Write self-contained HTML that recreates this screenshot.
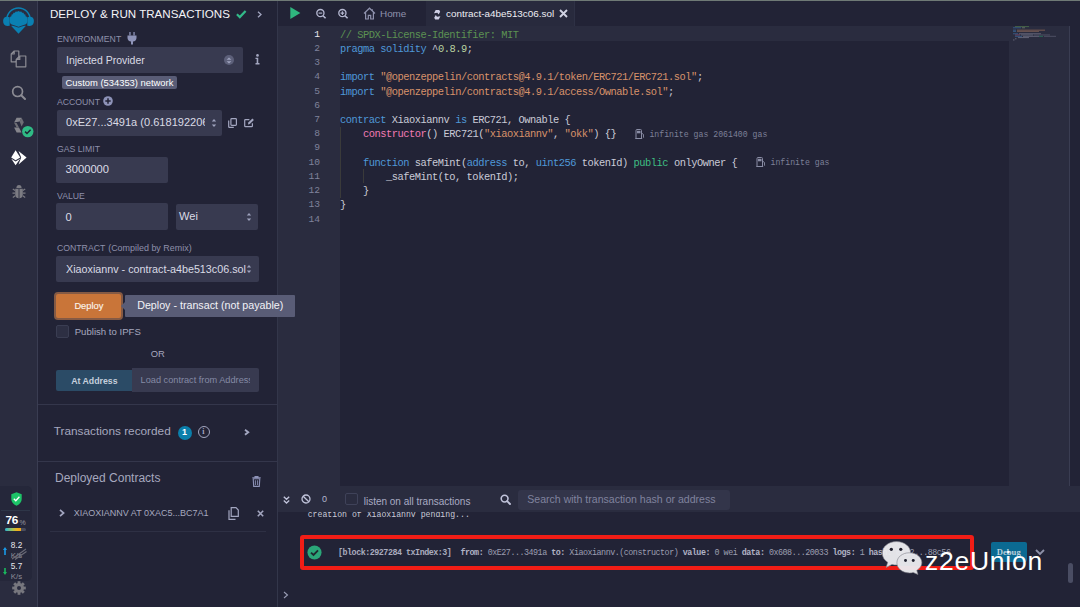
<!DOCTYPE html>
<html><head><meta charset="utf-8">
<style>
*{box-sizing:border-box;margin:0;padding:0}
html,body{width:1080px;height:607px;overflow:hidden;background:#222336;font-family:"Liberation Sans",sans-serif;color:#babbcc;position:relative}
.a{position:absolute}
.t{position:absolute;white-space:pre;line-height:1}
.lbl{position:absolute;white-space:pre;line-height:1;font-size:8.7px;color:#8e90ab}
.box{position:absolute;background:#383a50;border-radius:2px}
.code{position:absolute;left:340px;font-family:"Liberation Mono",monospace;font-size:10.4px;letter-spacing:-0.48px;line-height:14.23px;white-space:pre;color:#c9cad6}
.ln{position:absolute;left:284px;width:36px;font-family:"Liberation Mono",monospace;font-size:9.6px;line-height:14.23px;white-space:pre;color:#80839c;text-align:right}
.kw{color:#4f98d8}.str{color:#d8926a}.cm{color:#5c9252}.num{color:#b9d3a0}.pk{color:#f07bb4}.gr{color:#3fbf83}
.gas{position:absolute;font-family:"Liberation Mono",monospace;font-size:8.2px;line-height:1;white-space:pre;color:#7d8098}
svg{position:absolute;overflow:visible}
</style></head><body>
<!-- top line -->
<div class="a" style="left:0;top:0;width:1080px;height:1px;background:#6f7a76"></div>
<!-- icon panel -->
<div class="a" style="left:0;top:1px;width:37px;height:606px;background:#2a2c3f"></div>
<div class="a" style="left:37px;top:1px;width:1px;height:606px;background:#3a3d52"></div>
<!-- side panel -->
<div class="a" style="left:38px;top:1px;width:239px;height:606px;background:#222336"></div>
<div class="a" style="left:277px;top:1px;width:1px;height:606px;background:#33364a"></div>


<!-- SIDE PANEL CONTENT -->
<div class="t" style="left:50px;top:8.4px;font-size:11.6px;color:#f4f4f8">DEPLOY &amp; RUN TRANSACTIONS</div>
<svg style="left:235.5px;top:9.8px" width="10.5" height="8.5" viewBox="0 0 10.5 8.5"><path d="M0.9 4.3 L3.8 7.1 L9.6 1" fill="none" stroke="#32ba89" stroke-width="2.2"/></svg>
<svg style="left:257px;top:10.5px" width="5" height="7" viewBox="0 0 5 7"><path d="M1 0.8 L4 3.5 L1 6.2" fill="none" stroke="#a3a6c0" stroke-width="1.3"/></svg>

<div class="lbl" style="left:57px;top:34.8px">ENVIRONMENT</div>
<svg style="left:127px;top:32px" width="10" height="13" viewBox="0 0 10 13"><rect x="2.3" y="0" width="1.3" height="3.5" fill="#8e93b8"/><rect x="6.4" y="0" width="1.3" height="3.5" fill="#8e93b8"/><path d="M0.5 3.5 H9.5 V6 C9.5 8 8 9.3 6 9.6 V12.5 H4 V9.6 C2 9.3 0.5 8 0.5 6Z" fill="#8e93b8"/></svg>
<div class="box" style="left:57px;top:46.8px;width:186px;height:25.8px"></div>
<div class="t" style="left:66px;top:54.9px;font-size:10.5px;color:#dadbe5">Injected Provider</div>
<div class="a" style="left:224px;top:55px;width:10px;height:10px;border-radius:50%;background:#5d607a"></div>
<svg style="left:226px;top:56.5px" width="6" height="7" viewBox="0 0 6 7"><path d="M0.6 2.8 L3 0.4 L5.4 2.8Z M0.6 4.2 L3 6.6 L5.4 4.2Z" fill="#9fa3be"/></svg>
<svg style="left:254.5px;top:53.7px" width="5" height="10.4" viewBox="0 0 6 12" preserveAspectRatio="none"><circle cx="3" cy="1.6" r="1.6" fill="#a3a6c0"/><path d="M0.6 4.2 H3.9 V10.4 H5.4 V12 H0.6 V10.4 H2 V5.8 H0.6Z" fill="#a3a6c0"/></svg>
<div class="a" style="left:62px;top:76px;width:115px;height:13px;background:#595c76;border-radius:2px"></div>
<div class="t" style="left:65.5px;top:77.6px;font-size:9.4px;color:#ffffff">Custom (534353) network</div>

<div class="lbl" style="left:57px;top:97.5px">ACCOUNT</div>
<svg style="left:103px;top:96px" width="10" height="10" viewBox="0 0 10 10"><circle cx="5" cy="5" r="4.8" fill="#8e93b8"/><path d="M5 2.3 V7.7 M2.3 5 H7.7" stroke="#222336" stroke-width="1.5"/></svg>
<div class="box" style="left:57px;top:110px;width:165px;height:25.5px"></div>
<div class="a" style="left:66px;top:114px;width:138.5px;height:18px;overflow:hidden"><div class="t" style="left:0;top:3.1px;font-size:11.05px;color:#dadbe5">0xE27...3491a (0.618192206</div></div>
<svg style="left:211px;top:117.5px" width="6" height="10" viewBox="0 0 6 10"><path d="M0.8 3.6 L3 1 L5.2 3.6Z M0.8 6.4 L3 9 L5.2 6.4Z" fill="#9fa3be"/></svg>
<svg style="left:227.8px;top:118px" width="9" height="10" viewBox="0 0 9 10"><rect x="2.9" y="0.6" width="5.5" height="6.8" rx="0.8" fill="none" stroke="#a3a6c0" stroke-width="1.2"/><path d="M0.7 2.6 V8.7 Q0.7 9.4 1.4 9.4 H5.8" fill="none" stroke="#a3a6c0" stroke-width="1.2"/></svg>
<svg style="left:244.4px;top:118px" width="11.2" height="9.4" viewBox="0 0 11.2 9.4"><path d="M5.4 1.6 H1.5 Q0.7 1.6 0.7 2.4 V7.9 Q0.7 8.7 1.5 8.7 H7.6 Q8.4 8.7 8.4 7.9 V5.2" fill="none" stroke="#a3a6c0" stroke-width="1.2"/><path d="M4 6.4 L4.3 4.6 L8.4 0.5 L9.9 2 L5.8 6.1Z" fill="#a3a6c0"/></svg>

<div class="lbl" style="left:57px;top:144.8px">GAS LIMIT</div>
<div class="box" style="left:56px;top:156.5px;width:111.5px;height:26px"></div>
<div class="t" style="left:65.5px;top:164.3px;font-size:11.2px;color:#dadbe5">3000000</div>

<div class="lbl" style="left:57px;top:192px">VALUE</div>
<div class="box" style="left:56px;top:203px;width:111.5px;height:26.5px"></div>
<div class="t" style="left:65.5px;top:211.6px;font-size:11.2px;color:#dadbe5">0</div>
<div class="box" style="left:175.5px;top:204px;width:82.5px;height:25.5px"></div>
<div class="t" style="left:179px;top:211px;font-size:11.1px;color:#dadbe5">Wei</div>
<svg style="left:246px;top:212px" width="6" height="10" viewBox="0 0 6 10"><path d="M0.8 3.6 L3 1 L5.2 3.6Z M0.8 6.4 L3 9 L5.2 6.4Z" fill="#9fa3be"/></svg>

<div class="lbl" style="left:57px;top:244px">CONTRACT</div>
<div class="t" style="left:108.2px;top:243.9px;font-size:8.95px;color:#8e90ab">(Compiled by Remix)</div>
<div class="box" style="left:56px;top:255.6px;width:202.5px;height:26px"></div>
<div class="a" style="left:66px;top:258px;width:180px;height:20px;overflow:hidden"><div class="t" style="left:0;top:5.8px;font-size:10.75px;color:#dadbe5">Xiaoxiannv - contract-a4be513c06.sol</div></div>
<svg style="left:246px;top:264px" width="6" height="10" viewBox="0 0 6 10"><path d="M0.8 3.6 L3 1 L5.2 3.6Z M0.8 6.4 L3 9 L5.2 6.4Z" fill="#9fa3be"/></svg>

<!-- deploy -->
<div class="a" style="left:54.3px;top:291.7px;width:69px;height:28.6px;background:#c97539;border:2px solid #855a44;border-radius:4px"></div>
<div class="t" style="left:74.4px;top:301.6px;font-size:9.3px;color:#fbf3ea;-webkit-text-stroke:0.15px #fbf3ea">Deploy</div>
<svg style="left:120px;top:301px" width="6" height="10" viewBox="0 0 6 10"><path d="M6 0 L1 5 L6 10Z" fill="#595c76"/></svg>
<div class="a" style="left:125px;top:295px;width:170px;height:22px;background:#595c76;border-radius:1px;z-index:5"></div>
<div class="t" style="left:137.2px;top:299.9px;font-size:10.7px;color:#f2f2f6;z-index:6">Deploy - transact (not payable)</div>

<div class="a" style="left:56px;top:325.4px;width:13px;height:12.2px;background:#2d2f43;border:1px solid #3a3d52;border-radius:2px"></div>
<div class="t" style="left:74.7px;top:326.8px;font-size:9.6px;color:#a6a8bf">Publish to IPFS</div>
<div class="t" style="left:150.8px;top:349.4px;font-size:9.4px;color:#a6a8bf">OR</div>

<div class="a" style="left:56px;top:370px;width:76px;height:21px;background:#2b4b66;border-radius:2px 0 0 2px"></div>
<div class="t" style="left:71.2px;top:376.5px;font-size:8.75px;font-weight:bold;color:#c5cfdc">At Address</div>
<div class="a" style="left:132px;top:368.4px;width:126.6px;height:23.2px;background:#383a50;border-radius:0 2px 2px 0"></div>
<div class="a" style="left:140px;top:372px;width:110px;height:16px;overflow:hidden"><div class="t" style="left:0.6px;top:4px;font-size:9.2px;color:#858aa5">Load contract from Address</div></div>

<div class="a" style="left:38px;top:404px;width:239px;height:1px;background:#34364b"></div>
<div class="t" style="left:53.8px;top:426px;font-size:11.8px;color:#a6a8bf">Transactions recorded</div>
<div class="a" style="left:177.8px;top:425.6px;width:14px;height:14px;border-radius:50%;background:#0b7fab"></div>
<div class="t" style="left:182px;top:428px;font-size:9px;font-weight:bold;color:#ffffff">1</div>
<div class="a" style="left:197.8px;top:426.2px;width:12px;height:12px;border-radius:50%;border:1.2px solid #a3a6c0"></div>
<div class="t" style="left:202.3px;top:428.1px;font-size:8px;font-weight:bold;color:#a3a6c0;font-family:'Liberation Serif',serif">i</div>
<svg style="left:244.4px;top:429px" width="5.5" height="6.5" viewBox="0 0 5.5 6.5"><path d="M1 0.8 L4.2 3.25 L1 5.7" fill="none" stroke="#a3a6c0" stroke-width="1.9"/></svg>

<div class="a" style="left:38px;top:461px;width:239px;height:1px;background:#34364b"></div>
<div class="t" style="left:55px;top:472px;font-size:12px;color:#a6a8bf">Deployed Contracts</div>
<svg style="left:251.5px;top:475.5px" width="9" height="11" viewBox="0 0 9 11"><path d="M0.3 1.8 H8.7 M3 1.8 V0.6 H6 V1.8" fill="none" stroke="#8e93b8" stroke-width="1.1"/><path d="M1.2 2.8 H7.8 L7.3 10.4 H1.7Z" fill="none" stroke="#8e93b8" stroke-width="1.1"/><path d="M3.4 4.3 V9 M5.6 4.3 V9" stroke="#8e93b8" stroke-width="0.9"/></svg>
<svg style="left:58.5px;top:509px" width="6" height="8" viewBox="0 0 6 8"><path d="M1 0.8 L4.6 4 L1 7.2" fill="none" stroke="#a3a6c0" stroke-width="1.7"/></svg>
<div class="t" style="left:73.8px;top:508.6px;font-size:9px;color:#a6a8bf">XIAOXIANNV AT 0XAC5...BC7A1</div>
<svg style="left:227.5px;top:506.5px" width="11" height="13" viewBox="0 0 11 13"><path d="M3.2 0.7 H8 L10.3 3 V9.3 H3.2Z" fill="none" stroke="#a3a6c0" stroke-width="1.2"/><path d="M1 3.3 V12.3 H7.5" fill="none" stroke="#a3a6c0" stroke-width="1.2"/></svg>
<svg style="left:256.5px;top:509.5px" width="7" height="7" viewBox="0 0 7 7"><path d="M0.8 0.8 L6.2 6.2 M6.2 0.8 L0.8 6.2" stroke="#a3a6c0" stroke-width="1.6"/></svg>
<div class="a" style="left:50px;top:531px;width:216px;height:1px;background:#2e3044"></div>


<!-- ICON PANEL ICONS -->
<svg style="left:0;top:0" width="37" height="40" viewBox="0 0 37 40">
 <path d="M6.9 19.5 A11.6 11.6 0 0 1 30.1 19.5" fill="none" stroke="#0a80b2" stroke-width="1.5"/>
 <path d="M3.1 21 Q3.1 16.7 7.2 16.7 L9.7 17.2 L9.7 25.8 L7.2 25.9 Q3.1 25.7 3.1 21Z" fill="#0a80b2"/>
 <path d="M33.9 21 Q33.9 16.7 29.8 16.7 L27.3 17.2 L27.3 25.8 L29.8 25.9 Q33.9 25.7 33.9 21Z" fill="#0a80b2"/>
 <path d="M9.6 20 L10.2 16.8 L11.4 16.2 L11.6 14.6 L13 14.2 L13.4 12.8 L14.9 12.7 L15.7 11.5 L17.1 11.8 L18.5 10.9 L19.9 11.8 L21.3 11.5 L22.1 12.7 L23.6 12.8 L24 14.2 L25.4 14.6 L25.6 16.2 L26.8 16.8 L27.4 20 Q27.4 24.2 24.2 25.6 L18.5 26.8 L12.8 25.6 Q9.6 24.2 9.6 20Z" fill="#0a80b2"/>
 <path d="M11 25.8 L26 25.8 L18.5 33.8Z" fill="#0a80b2"/>
 <path d="M10.8 24.6 L18.5 27.2 L26.2 24.6" fill="none" stroke="#2a2c3f" stroke-width="0.8"/>
</svg>
<svg style="left:10px;top:50px" width="18" height="18" viewBox="0 0 18 18">
 <path d="M4.2 1 H8.8 V8.8 L5.7 11.8 H1.2 V4 Z M1.2 4 H4.2 V1" fill="none" stroke="#8c8c94" stroke-width="1.2" stroke-linejoin="round"/>
 <path d="M9.8 6 H15.8 V16.8 H6.2 V9.4 Z M6.2 9.4 H9.8 V6" fill="#2a2c3f" stroke="#8c8c94" stroke-width="1.2" stroke-linejoin="round"/>
</svg>
<svg style="left:11px;top:85px" width="16" height="16" viewBox="0 0 16 16">
 <circle cx="6.6" cy="6.6" r="4.9" fill="none" stroke="#8c8c94" stroke-width="1.7"/>
 <path d="M10.2 10.2 L14 14" stroke="#8c8c94" stroke-width="2" stroke-linecap="round"/>
</svg>
<svg style="left:0;top:110px" width="37" height="60" viewBox="0 0 37 110">
</svg>
<svg style="left:0;top:0" width="37" height="200" viewBox="0 0 37 200">
 <path d="M14.1 122.6 L16.6 117.7 L21.6 117.7 L19.6 121.6 Z" fill="#85858c"/>
 <path d="M21.6 117.7 L23.8 122.2 L21.6 126.4 L19.6 121.6 Z" fill="#6e6e75"/>
 <path d="M14.1 127.4 L16.6 132.4 L21.6 132.4 L19 127.6 Z" fill="#85858c"/>
 <path d="M14.1 122.8 L16.6 127.6 L19 127.6 L16.6 123 Z" fill="#6e6e75"/>
 <circle cx="27.8" cy="131.6" r="5.7" fill="#2fbb85"/>
 <path d="M25.1 131.6 L27 133.5 L30.6 129.8" fill="none" stroke="#1f2433" stroke-width="1.5"/>
 <path d="M18.5 151 L26.6 157.6 L18.5 164.6 L21.2 157.6 Z" fill="#ffffff"/>
 <path d="M15.6 150.2 L20.3 157.4 L15.6 160.2 L11.2 157.4 Z" fill="#ffffff"/>
 <path d="M11.3 158.8 L15.6 161.6 L20.2 158.8 L15.6 165.2 Z" fill="#ffffff"/>
</svg>
<svg style="left:12px;top:184px" width="14" height="15" viewBox="0 0 14 15">
 <path d="M4.4 4 Q4.4 1 7 1 Q9.6 1 9.6 4Z" fill="#7b7b82"/>
 <path d="M3.2 4.8 H10.8 V10.5 Q10.8 14.2 7 14.2 Q3.2 14.2 3.2 10.5Z" fill="#7b7b82"/>
 <path d="M7 5 V14" stroke="#2a2c3f" stroke-width="0.9"/>
 <path d="M3.2 6.5 L0.8 5 M3.2 9.2 H0.5 M3.2 11.8 L0.8 13.4 M10.8 6.5 L13.2 5 M10.8 9.2 H13.5 M10.8 11.8 L13.2 13.4" stroke="#7b7b82" stroke-width="1.2"/>
</svg>

<!-- monitor overlay widget -->
<div class="a" style="left:-4px;top:486.4px;width:36px;height:94.5px;background:#25273a;border-radius:5px"></div>
<svg style="left:10.5px;top:491.5px" width="11" height="14" viewBox="0 0 11 14"><path d="M5.5 0.3 L10.7 2.2 V7 Q10.7 11.3 5.5 13.7 Q0.3 11.3 0.3 7 V2.2Z" fill="#1dc468"/><path d="M2.8 6.8 L4.8 8.8 L8.4 4.8" fill="none" stroke="#ffffff" stroke-width="1.3"/></svg>
<div class="a" style="left:1px;top:510px;width:29px;height:1px;background:#2e3648"></div>
<div class="t" style="left:5.6px;top:515px;font-size:11.8px;font-weight:bold;color:#ffffff;letter-spacing:-0.3px">76</div>
<div class="t" style="left:19.6px;top:519px;font-size:7px;color:#9a9aa6">%</div>
<div class="a" style="left:5px;top:528px;width:21px;height:3px;border-radius:1.5px;background:#4b4d5c"></div>
<div class="a" style="left:5px;top:528px;width:16.2px;height:3px;border-radius:1.5px 0 0 1.5px;background:linear-gradient(90deg,#27b5d8,#9fc35a 45%,#efb41e 75%,#f0a31a)"></div>
<svg style="left:3px;top:547px" width="4" height="8" viewBox="0 0 4 8"><path d="M2 0 L4 3 H2.8 V8 H1.2 V3 H0Z" fill="#1a9ae8"/></svg>
<div class="t" style="left:10.8px;top:541.8px;font-size:8.2px;color:#e8e8ee">8.2</div>
<div class="t" style="left:10.8px;top:551.6px;font-size:7.8px;color:#8d8d98">K/s</div>
<svg style="left:11px;top:548px" width="16" height="12" viewBox="0 0 16 12"><path d="M1 11 L15 1 M4 11.5 L15.5 3.5" stroke="#6c6c78" stroke-width="1.1"/></svg>
<svg style="left:3px;top:568px" width="4" height="7" viewBox="0 0 4 7"><path d="M2 7 L4 4 H2.8 V0 H1.2 V4 H0Z" fill="#1ab85e"/></svg>
<div class="t" style="left:10.8px;top:563px;font-size:8.2px;color:#e8e8ee">5.7</div>
<div class="t" style="left:10.8px;top:572.7px;font-size:7.8px;color:#8d8d98">K/s</div>
<svg style="left:12px;top:581px" width="14" height="14" viewBox="0 0 14 14"><g fill="#77777e"><circle cx="7" cy="7" r="5"/><rect x="5.6" y="0.2" width="2.8" height="13.6"/><rect x="5.6" y="0.2" width="2.8" height="13.6" transform="rotate(45 7 7)"/><rect x="5.6" y="0.2" width="2.8" height="13.6" transform="rotate(90 7 7)"/><rect x="5.6" y="0.2" width="2.8" height="13.6" transform="rotate(135 7 7)"/></g><circle cx="7" cy="7" r="2" fill="#2a2c3f"/></svg>

<!-- EDITOR -->
<div class="a" style="left:278px;top:1px;width:802px;height:25px;background:#222336"></div>
<div class="a" style="left:426px;top:1px;width:149px;height:25px;background:#282a3d"></div>
<div class="a" style="left:574px;top:1px;width:1px;height:25px;background:#2e3145"></div>
<!-- gutter -->
<div class="a" style="left:278px;top:26px;width:62px;height:460px;background:#2a2c3f"></div>
<!-- current line -->
<div class="a" style="left:340px;top:26px;width:669px;height:15px;background:#2a2c3f"></div>
<!-- minimap -->
<div class="a" style="left:1009px;top:26px;width:61px;height:460px;background:#2a2c3f"></div>
<div class="a" style="left:1069px;top:26px;width:1px;height:460px;background:#3a3d52"></div>
<div class="a" style="left:1070px;top:26px;width:10px;height:460px;background:#222336"></div>


<!-- tabs -->
<svg style="left:289.7px;top:7px" width="11" height="12" viewBox="0 0 11 12"><path d="M0.3 0 L10.4 6 L0.3 12Z" fill="#2fb67f"/></svg>
<svg style="left:315px;top:7.5px" width="12" height="12" viewBox="0 0 12 12"><circle cx="5.4" cy="5.1" r="3.6" fill="none" stroke="#b4b7d0" stroke-width="1.3"/><path d="M8 7.7 L10.6 10.3" stroke="#b4b7d0" stroke-width="1.6"/><path d="M3.6 5.1 H7.2" stroke="#b4b7d0" stroke-width="1.1"/></svg>
<svg style="left:337.2px;top:7.5px" width="12" height="12" viewBox="0 0 12 12"><circle cx="5.4" cy="5.1" r="3.6" fill="none" stroke="#b4b7d0" stroke-width="1.3"/><path d="M8 7.7 L10.6 10.3" stroke="#b4b7d0" stroke-width="1.6"/><path d="M3.6 5.1 H7.2 M5.4 3.3 V6.9" stroke="#b4b7d0" stroke-width="1.1"/></svg>
<svg style="left:363px;top:6.5px" width="13" height="13" viewBox="0 0 13 13"><path d="M1 6.5 L6.5 1.2 L12 6.5 M2.6 5.2 V12 H5.3 V8.4 H7.7 V12 H10.4 V5.2 M9.3 2.2 V3.8" fill="none" stroke="#8f92ad" stroke-width="1.2"/></svg>
<div class="t" style="left:380px;top:9px;font-size:9.9px;color:#8f92ad">Home</div>
<svg style="left:434px;top:9.6px" width="6.4" height="9.6" viewBox="0 0 6.4 9.6"><path d="M0 3.3 L1.7 0 L5.2 0 L6.2 1.8 L4.6 4.6 L3.4 2.8 Z" fill="#cfd0e6"/><path d="M6.4 6.3 L4.7 9.6 L1.2 9.6 L0.2 7.8 L1.8 5 L3 6.8 Z" fill="#cfd0e6"/></svg>
<div class="t" style="left:446px;top:9px;font-size:9.9px;color:#eeeef4">contract-a4be513c06.sol</div>
<svg style="left:559px;top:9px" width="9" height="9" viewBox="0 0 9 9"><path d="M1 1 L8 8 M8 1 L1 8" stroke="#d0d2e2" stroke-width="1.9"/></svg>

<!-- line numbers -->
<div class="ln" style="top:27.6px"><span style="color:#e8e8ee">1</span>
2
3
4
5
6
7
8
9
10
11
12
13
14</div>
<div class="code" style="top:27.6px"><span class="cm">// SPDX-License-Identifier: MIT</span>
<span class="kw">pragma</span> <span class="kw">solidity</span> ^<span class="num">0.8.9</span>;

<span class="kw">import</span> <span class="str">"@openzeppelin/contracts@4.9.1/token/ERC721/ERC721.sol"</span>;
<span class="kw">import</span> <span class="str">"@openzeppelin/contracts@4.9.1/access/Ownable.sol"</span>;

<span class="kw">contract</span> Xiaoxiannv <span class="kw">is</span> ERC721, Ownable {
    <span class="pk">constructor</span>() ERC721(<span class="str">"xiaoxiannv"</span>, <span class="str">"okk"</span>) {}

    <span class="kw">function</span> safeMint(<span class="kw">address</span> to, <span class="kw">uint256</span> tokenId) <span class="gr">public</span> onlyOwner {
        _safeMint(to, tokenId);
    }
}
</div>
<!-- indent guides -->
<div class="a" style="left:340.3px;top:127px;width:1px;height:70.5px;background:#3a3a3a"></div>
<div class="a" style="left:363.4px;top:169.2px;width:1px;height:14px;background:#3a3a3a"></div>
<!-- gas annotations -->
<svg style="left:635px;top:128.5px" width="10" height="10" viewBox="0 0 10 10"><path d="M1 9.5 V1.5 Q1 0.5 2 0.5 H5.5 Q6.5 0.5 6.5 1.5 V9.5Z M0.3 9.5 H7.2" fill="none" stroke="#8a8da5" stroke-width="1"/><rect x="2" y="1.8" width="3.5" height="2.5" fill="#8a8da5"/><path d="M6.5 4 L8.5 5.5 V8 Q8.5 8.8 9 8.5" fill="none" stroke="#8a8da5" stroke-width="0.9"/></svg>
<div class="gas" style="left:649.4px;top:130.6px">infinite gas 2061400 gas</div>
<svg style="left:756px;top:157px" width="10" height="10" viewBox="0 0 10 10"><path d="M1 9.5 V1.5 Q1 0.5 2 0.5 H5.5 Q6.5 0.5 6.5 1.5 V9.5Z M0.3 9.5 H7.2" fill="none" stroke="#8a8da5" stroke-width="1"/><rect x="2" y="1.8" width="3.5" height="2.5" fill="#8a8da5"/><path d="M6.5 4 L8.5 5.5 V8 Q8.5 8.8 9 8.5" fill="none" stroke="#8a8da5" stroke-width="0.9"/></svg>
<div class="gas" style="left:770.5px;top:159.1px">infinite gas</div>


<!-- minimap content -->
<svg style="left:1009px;top:26px" width="60" height="16" viewBox="0 0 60 16" style="opacity:.8">
 <g opacity="0.5">
 <rect x="6" y="0" width="14" height="1.1" fill="#5a8f4f"/>
 <rect x="4" y="1.2" width="8" height="1.1" fill="#3f7bb8"/><rect x="13" y="1.2" width="3" height="1.1" fill="#8fa080"/>
 <rect x="4" y="3.6" width="3" height="1.2" fill="#3f7bb8"/><rect x="8" y="3.6" width="28" height="1.2" fill="#b07a5c"/>
 <rect x="4" y="4.9" width="3" height="1.1" fill="#3f7bb8"/><rect x="8" y="4.9" width="22" height="1.1" fill="#a07560"/>
 <rect x="4" y="7.2" width="5" height="1.1" fill="#3f7bb8"/><rect x="10" y="7.2" width="22" height="1.1" fill="#8e90a4"/>
 <rect x="6" y="8.4" width="5" height="1.1" fill="#b05f8e"/><rect x="12" y="8.4" width="12" height="1.1" fill="#8e90a4"/><rect x="25" y="8.4" width="16" height="1.1" fill="#6a6c80"/>
 <rect x="6" y="9.8" width="7" height="1.1" fill="#3f7bb8"/><rect x="14" y="9.8" width="16" height="1.1" fill="#8e90a4"/><rect x="30" y="9.8" width="4" height="1.1" fill="#2a9a6a"/><rect x="35" y="9.8" width="12" height="1.1" fill="#6a6c80"/>
 <rect x="9" y="11" width="11" height="1.1" fill="#8e90a4"/>
 <rect x="6" y="12.2" width="1.5" height="1.1" fill="#8e90a4"/>
 <rect x="4" y="13.4" width="1.5" height="1.1" fill="#8e90a4"/>
 </g>
</svg>

<!-- TERMINAL -->
<div class="a" style="left:278px;top:486px;width:802px;height:26px;background:#2a2c3f"></div>
<div class="a" style="left:278px;top:512px;width:802px;height:95px;background:#222336"></div>


<!-- terminal bar content -->
<svg style="left:283px;top:495.5px" width="7" height="8" viewBox="0 0 7 8"><path d="M0.8 0.8 L3.5 3.2 L6.2 0.8 M0.8 4.6 L3.5 7 L6.2 4.6" fill="none" stroke="#c0c3da" stroke-width="1.4"/></svg>
<svg style="left:300.5px;top:493.7px" width="10" height="10" viewBox="0 0 10 10"><circle cx="5" cy="5" r="4" fill="none" stroke="#c0c3da" stroke-width="1.3"/><path d="M2.2 2.2 L7.8 7.8" stroke="#c0c3da" stroke-width="1.3"/></svg>
<div class="t" style="left:322px;top:494.5px;font-size:9px;color:#b4b7cf">0</div>
<div class="a" style="left:345px;top:493px;width:12.8px;height:11.7px;border:1px solid #3f4259;border-radius:2px;background:#2a2c3f"></div>
<div class="t" style="left:363.7px;top:496.5px;font-size:10px;color:#a9abc3">listen on all transactions</div>
<svg style="left:500px;top:494px" width="11" height="11" viewBox="0 0 11 11"><circle cx="4.6" cy="4.6" r="3.4" fill="none" stroke="#c0c3da" stroke-width="1.6"/><path d="M7.2 7.2 L10 10" stroke="#c0c3da" stroke-width="1.9" stroke-linecap="round"/></svg>
<div class="a" style="left:518px;top:490px;width:212px;height:19.5px;background:#33354a;border-radius:3px"></div>
<div class="t" style="left:527.3px;top:494.4px;font-size:10.55px;color:#80839e">Search with transaction hash or address</div>

<!-- terminal output -->
<div class="a" style="left:278px;top:512px;width:802px;height:95px;overflow:hidden">
 <div class="t" style="left:29.7px;top:-1.5px;font-family:'Liberation Mono',monospace;font-size:8.2px;color:#c9cad6">creation of Xiaoxiannv pending...</div>
</div>
<div class="a" style="left:300px;top:535px;width:674px;height:35px;border:4px solid #f11d16;border-radius:3px"></div>
<svg style="left:307.4px;top:544.8px" width="15" height="15" viewBox="0 0 15 15"><circle cx="7.5" cy="7.5" r="7.05" fill="#2ba779"/><path d="M4 7.6 L6.5 10 L11 5.3" fill="none" stroke="#1f2a30" stroke-width="1.9"/></svg>
<div class="t" style="left:338px;top:549.4px;font-family:'Liberation Mono',monospace;font-size:8.4px;letter-spacing:-0.49px;color:#9c9eb0"><b style="color:#a9abbd">[block:2927284 txIndex:3]</b>  <b style="color:#b0b2c4">from:</b> 0xE27...3491a <b style="color:#b0b2c4">to:</b> Xiaoxiannv.(constructor) <b style="color:#b0b2c4">value:</b> 0 wei <b style="color:#b0b2c4">data:</b> 0x608...20033 <b style="color:#b0b2c4">logs:</b> 1 <b style="color:#b0b2c4">hash:</b> 0x12...88c56</div>
<div class="a" style="left:990.5px;top:542px;width:36.5px;height:19.5px;background:#0b6a92;border-radius:2px"></div>
<div class="t" style="left:996.8px;top:547.8px;font-family:'Liberation Serif',serif;font-size:8.6px;font-weight:bold;color:#b9d0dc">Debug</div>
<svg style="left:1034.5px;top:548.5px" width="10" height="7" viewBox="0 0 10 7"><path d="M1 1 L5 5 L9 1" fill="none" stroke="#8d90a8" stroke-width="1.8"/></svg>
<div class="a" style="left:1068px;top:562.5px;width:5px;height:20px;background:#4a4d63;border-radius:3px"></div>
<svg style="left:283px;top:591px" width="6" height="8" viewBox="0 0 6 8"><path d="M1 1 L4.5 4 L1 7" fill="none" stroke="#9a9db5" stroke-width="1.1"/></svg>

<!-- watermark -->
<svg style="left:880.7px;top:540.1px;opacity:0.96" width="43" height="35" viewBox="0 0 50 40" >
 <path d="M18 1.5 C8.5 1.5 1.5 7.5 1.5 15 C1.5 19.5 4 23.2 7.8 25.6 L6 31.5 L12.8 28 C14.5 28.5 16.2 28.7 18 28.7 C27.5 28.7 34.5 22.7 34.5 15 C34.5 7.5 27.5 1.5 18 1.5Z" fill="#ebebef" stroke="#85858e" stroke-width="0.7"/>
 <circle cx="12" cy="10.5" r="1.9" fill="#1e1f2c"/><circle cx="23" cy="10.5" r="1.9" fill="#1e1f2c"/>
 <path d="M33 14.5 C24.5 14.5 18.5 19.8 18.5 26.2 C18.5 32.6 24.5 37.9 33 37.9 C34.5 37.9 36 37.7 37.4 37.3 L43 39.8 L41.6 35 C45 32.8 47.5 29.7 47.5 26.2 C47.5 19.8 41.5 14.5 33 14.5Z" fill="#ebebef" stroke="#85858e" stroke-width="0.7"/>
 <circle cx="28.5" cy="23.5" r="1.7" fill="#1e1f2c"/><circle cx="37.5" cy="23.5" r="1.7" fill="#1e1f2c"/>
</svg>
<div class="t" style="left:925px;top:547.6px;font-size:26.5px;letter-spacing:0.75px;color:#ffffff">z2eUnion</div>

</body></html>
